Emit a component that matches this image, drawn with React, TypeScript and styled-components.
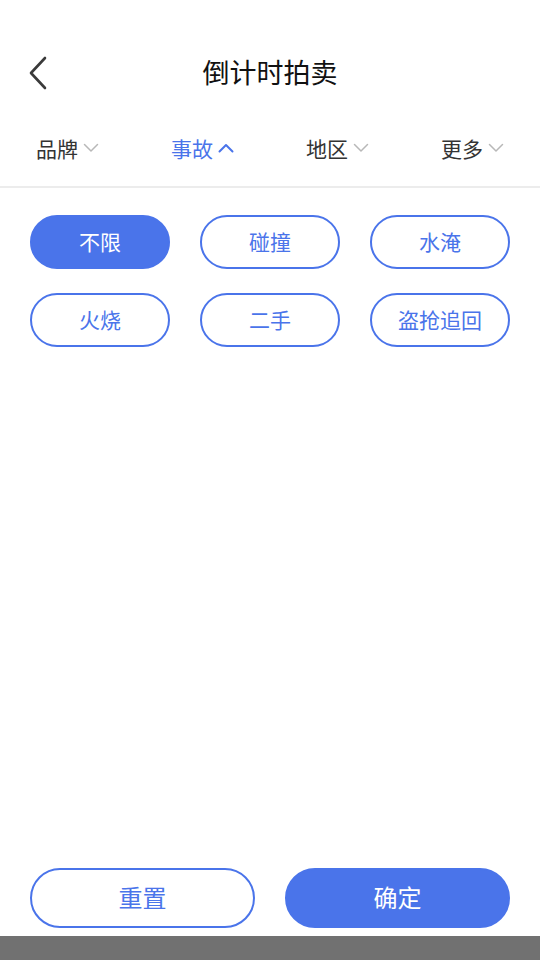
import React, { useState } from "react";
import styled, { createGlobalStyle } from "styled-components";

const BLUE = "#4a74ea";

const Global = createGlobalStyle`
  html, body { margin: 0; padding: 0; background: #fff; }
  body { font-family: "Noto Sans CJK SC", "Noto Sans", sans-serif; }
  * { box-sizing: border-box; }
`;

const Page = styled.div`
  width: 540px;
  height: 960px;
  display: flex;
  flex-direction: column;
  background: #fff;
`;

const Header = styled.header`
  height: 113px;
  padding-top: 44px;
  display: grid;
  grid-template-columns: 80px 1fr 80px;
  align-items: start;
`;

const BackButton = styled.button`
  border: none;
  background: none;
  padding: 0 0 0 28px;
  height: 36px;
  display: flex;
  align-items: center;
  margin-top: 11px;
`;

const Title = styled.h1`
  margin: 0;
  text-align: center;
  font-size: 27px;
  font-weight: 400;
  color: #111;
  line-height: 56px;
`;

const Tabs = styled.nav`
  height: 75px;
  display: grid;
  grid-template-columns: repeat(4, 1fr);
  border-bottom: 2px solid #ececec;
`;

const Tab = styled.div<{ $active?: boolean }>`
  display: flex;
  align-items: center;
  justify-content: center;
  gap: 5px;
  padding-bottom: 3px;
  font-size: 21px;
  color: ${(p) => (p.$active ? BLUE : "#333")};
  line-height: 1;
`;

const Options = styled.div`
  padding: 27px 30px 0;
  display: grid;
  grid-template-columns: repeat(3, 140px);
  column-gap: 30px;
  row-gap: 24px;
`;

const Chip = styled.button<{ $selected?: boolean }>`
  height: 54px;
  border-radius: 27px;
  border: 2px solid ${BLUE};
  background: ${(p) => (p.$selected ? BLUE : "#fff")};
  color: ${(p) => (p.$selected ? "#fff" : BLUE)};
  font-family: inherit;
  font-size: 21px;
  padding: 0 0 3px;
  cursor: pointer;
`;

const Spacer = styled.div`
  flex: 1;
`;

const Footer = styled.footer`
  display: grid;
  grid-template-columns: 225px 225px;
  column-gap: 30px;
  padding: 0 30px 8px;
`;

const ActionButton = styled.button<{ $primary?: boolean }>`
  height: 60px;
  border-radius: 30px;
  border: 2px solid ${BLUE};
  background: ${(p) => (p.$primary ? BLUE : "#fff")};
  color: ${(p) => (p.$primary ? "#fff" : BLUE)};
  font-family: inherit;
  font-size: 24px;
  padding: 0 0 3px;
`;

const NavBar = styled.div`
  height: 24px;
  background: #717171;
`;

const Chevron = ({ up, color }: { up?: boolean; color: string }) => (
  <svg width="16" height="10" viewBox="0 0 16 10" fill="none">
    <path
      d={up ? "M1.5 8.5 L8 2 L14.5 8.5" : "M1.5 1.5 L8 8 L14.5 1.5"}
      stroke={color}
      strokeWidth={up ? 2 : 1.5}
      strokeLinecap="round"
      strokeLinejoin="round"
    />
  </svg>
);

const tabs = [
  { label: "品牌" },
  { label: "事故", active: true },
  { label: "地区" },
  { label: "更多" },
];

const options = ["不限", "碰撞", "水淹", "火烧", "二手", "盗抢追回"];

export default function App() {
  const [sel, setSel] = useState(0);
  return (
    <Page>
      <Global />
      <Header>
        <BackButton aria-label="返回">
          <svg width="20" height="34" viewBox="0 0 20 34" fill="none">
            <path
              d="M17 2 L3 17 L17 32"
              stroke="#3a3a3a"
              strokeWidth="2.6"
              strokeLinecap="round"
              strokeLinejoin="round"
            />
          </svg>
        </BackButton>
        <Title>倒计时拍卖</Title>
        <div />
      </Header>
      <Tabs>
        {tabs.map((t) => (
          <Tab key={t.label} $active={t.active}>
            {t.label}
            <Chevron up={t.active} color={t.active ? BLUE : "#b8b8b8"} />
          </Tab>
        ))}
      </Tabs>
      <Options>
        {options.map((o, i) => (
          <Chip key={o} $selected={i === sel} onClick={() => setSel(i)}>
            {o}
          </Chip>
        ))}
      </Options>
      <Spacer />
      <Footer>
        <ActionButton>重置</ActionButton>
        <ActionButton $primary>确定</ActionButton>
      </Footer>
      <NavBar />
    </Page>
  );
}
